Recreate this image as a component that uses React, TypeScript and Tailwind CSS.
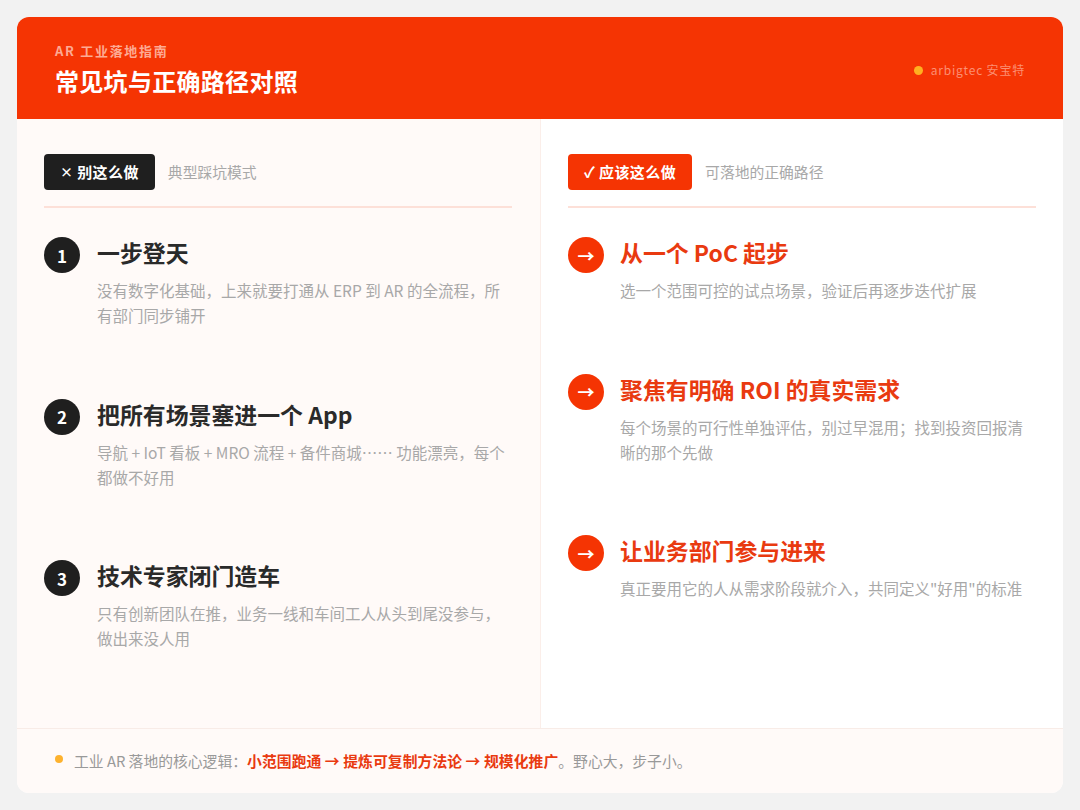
const FONT = "font-['Noto_Sans_CJK_SC','Noto_Sans',sans-serif]";

const wrong = [
  {
    n: '1',
    title: '一步登天',
    desc: '没有数字化基础，上来就要打通从 ERP 到 AR 的全流程，所有部门同步铺开',
  },
  {
    n: '2',
    title: '把所有场景塞进一个 App',
    desc: '导航 + IoT 看板 + MRO 流程 + 备件商城…… 功能漂亮，每个都做不好用',
  },
  {
    n: '3',
    title: '技术专家闭门造车',
    desc: '只有创新团队在推，业务一线和车间工人从头到尾没参与，做出来没人用',
  },
];

const right = [
  {
    title: '从一个 PoC 起步',
    desc: '选一个范围可控的试点场景，验证后再逐步迭代扩展',
  },
  {
    title: '聚焦有明确 ROI 的真实需求',
    desc: '每个场景的可行性单独评估，别过早混用；找到投资回报清晰的那个先做',
  },
  {
    title: '让业务部门参与进来',
    desc: '真正要用它的人从需求阶段就介入，共同定义"好用"的标准',
  },
];

function Item({
  mark,
  title,
  desc,
  accent,
}: {
  mark: string;
  title: string;
  desc: string;
  accent?: boolean;
}) {
  return (
    <div className={`flex pb-[70.5px] ${accent ? 'gap-[16px]' : 'gap-[17px]'}`}>
      <div
        className={`flex h-9 w-9 shrink-0 items-center justify-center rounded-full text-[17px] font-bold leading-none text-white ${
          accent ? 'bg-[#f53403]' : 'bg-[#1f1f1f]'
        }`}
      >
        {mark}
      </div>
      <div className="min-w-0 flex-1">
        <div
          className={`text-[22.9px] font-bold leading-[30px] ${
            accent ? 'text-[#e93a10]' : 'text-[#2a2a2a]'
          }`}
        >
          {title}
        </div>
        <div className="mt-[11px] text-[15.5px] leading-[25px] text-[#a8a8a8]">{desc}</div>
      </div>
    </div>
  );
}

function PanelHead({
  icon,
  badge,
  note,
  accent,
}: {
  icon: string;
  badge: string;
  note: string;
  accent?: boolean;
}) {
  return (
    <div className="flex items-center gap-[13px] border-b-2 border-[#fde0d8] pb-[16px]">
      <div
        className={`flex h-9 items-center rounded-[4px] px-[16px] text-[15px] font-bold tracking-[0.4px] text-white ${
          accent ? 'bg-[#f53403]' : 'bg-[#1f1f1f]'
        }`}
      >
        <span className={accent ? '' : 'text-[13px]'}>{icon}</span>
        <span>&nbsp;{badge}</span>
      </div>
      <div className="text-[14.8px] text-[#a8a8a8]">{note}</div>
    </div>
  );
}

export default function App() {
  return (
    <div className={`h-[810px] w-[1080px] bg-[#f2f2f2] p-[17px] ${FONT}`}>
      <div className="flex h-[776px] w-[1046px] flex-col overflow-hidden rounded-[12px] bg-white">
        <header className="flex h-[102px] shrink-0 items-center justify-between bg-[#f53403] px-[38px]">
          <div className="pt-[4px]">
            <div className="text-[13px] font-bold leading-[18px] tracking-[1.7px] text-[#fdaa94]">
              AR 工业落地指南
            </div>
            <div className="mt-[4px] text-[24px] font-bold leading-[34px] tracking-[0.3px] text-white">
              常见坑与正确路径对照
            </div>
          </div>
          <div className="flex items-center gap-[8px] pt-[4px] text-[12px] tracking-[0.8px] text-[#fc8f73]">
            <span className="h-[9px] w-[9px] rounded-full bg-[#ffb020]" />
            arbigtec 安宝特
          </div>
        </header>

        <main className="flex min-h-0 flex-1">
          <section className="w-[524px] border-r border-[#fbeee9] bg-[#fffaf8] pl-[27px] pr-[28px] pt-[35px]">
            <PanelHead icon="×" badge="别这么做" note="典型踩坑模式" />
            <div className="pt-[29px]">
              {wrong.map((it) => (
                <Item key={it.n} mark={it.n} title={it.title} desc={it.desc} />
              ))}
            </div>
          </section>
          <section className="flex-1 px-[27px] pt-[35px]">
            <PanelHead icon="✓" badge="应该这么做" note="可落地的正确路径" accent />
            <div className="pt-[29px]">
              {right.map((it) => (
                <Item key={it.title} mark="→" title={it.title} desc={it.desc} accent />
              ))}
            </div>
          </section>
        </main>

        <footer className="flex h-[65px] shrink-0 items-center gap-[11px] border-t border-[#f8ece7] bg-[#fffaf8] pl-[38px] text-[14.8px] text-[#999999]">
          <span className="mb-[4px] h-[8px] w-[8px] rounded-full bg-[#fdb22e]" />
          <div>
            工业 AR 落地的核心逻辑：
            <span className="font-bold tracking-[0.08px] text-[#e93a10]">
              小范围跑通 → 提炼可复制方法论 → 规模化推广
            </span>
            。野心大，步子小。
          </div>
        </footer>
      </div>
    </div>
  );
}
